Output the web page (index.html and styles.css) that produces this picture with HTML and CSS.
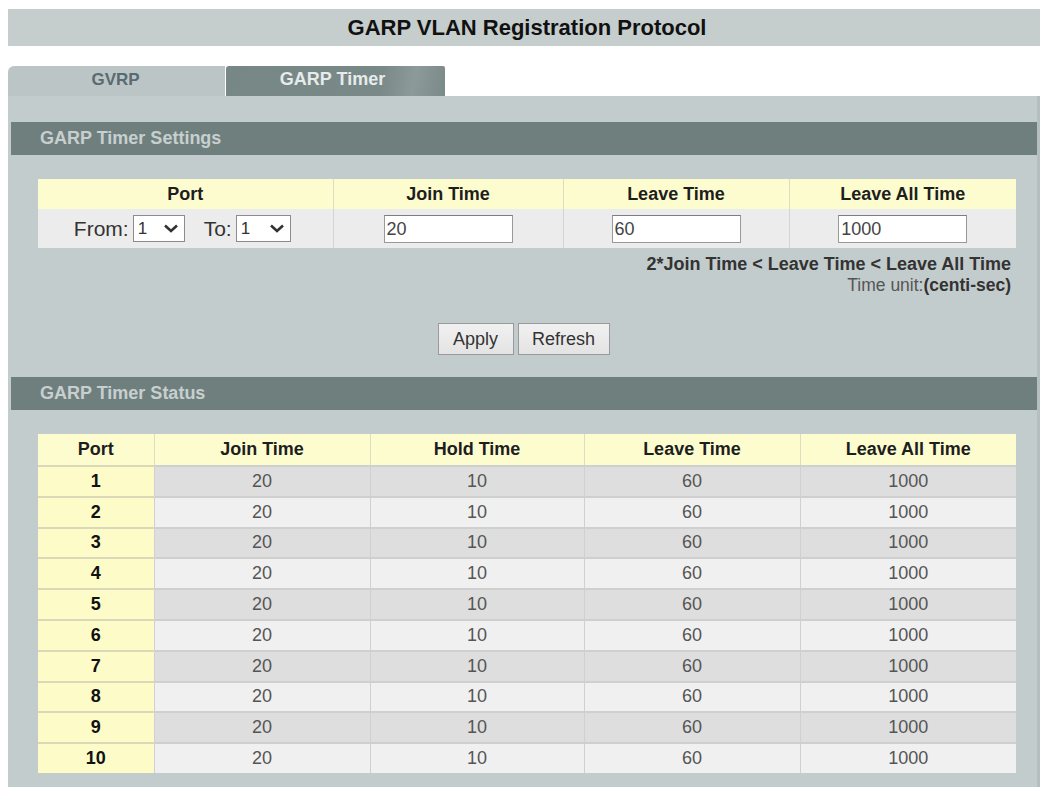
FILE: index.html
```html
<!DOCTYPE html>
<html>
<head>
<meta charset="utf-8">
<link rel="stylesheet" href="styles.css">
</head>
<body>
<div class="page">
  <div class="title-bar">GARP VLAN Registration Protocol</div>
  <div class="tabs">
    <div class="tab tab-inactive">GVRP</div>
    <div class="tab tab-active">GARP Timer</div>
  </div>
  <div class="panel">
    <div class="section-head">GARP Timer Settings</div>
    <table class="settings">
      <colgroup><col class="c1"><col class="c2"><col class="c3"><col class="c4"></colgroup>
      <thead>
        <tr><th>Port</th><th>Join Time</th><th>Leave Time</th><th>Leave All Time</th></tr>
      </thead>
      <tbody>
        <tr>
          <td>
            <div class="port-pick">
              <span class="lbl">From:</span>
              <span class="fake-select"><span>1</span><svg width="16" height="11" viewBox="0 0 16 11"><path d="M2 2.5 L8 8 L14 2.5" fill="none" stroke="#333" stroke-width="2.6"/></svg></span>
              <span class="lbl lbl-to">To:</span>
              <span class="fake-select"><span>1</span><svg width="16" height="11" viewBox="0 0 16 11"><path d="M2 2.5 L8 8 L14 2.5" fill="none" stroke="#333" stroke-width="2.6"/></svg></span>
            </div>
          </td>
          <td><span class="txt-input">20</span></td>
          <td><span class="txt-input">60</span></td>
          <td><span class="txt-input">1000</span></td>
        </tr>
      </tbody>
    </table>
    <div class="notes">
      <div class="note-rule">2*Join Time &lt; Leave Time &lt; Leave All Time</div>
      <div class="note-unit">Time unit:<b>(centi-sec)</b></div>
    </div>
    <div class="buttons">
      <span class="btn btn-apply">Apply</span>
      <span class="btn btn-refresh">Refresh</span>
    </div>
    <div class="section-head">GARP Timer Status</div>
    <table class="status">
      <colgroup><col class="s1"><col class="s2"><col class="s3"><col class="s4"><col class="s5"></colgroup>
      <thead>
        <tr><th>Port</th><th>Join Time</th><th>Hold Time</th><th>Leave Time</th><th>Leave All Time</th></tr>
      </thead>
      <tbody>
        <tr class="odd"><td class="port">1</td><td>20</td><td>10</td><td>60</td><td>1000</td></tr>
        <tr class="even"><td class="port">2</td><td>20</td><td>10</td><td>60</td><td>1000</td></tr>
        <tr class="odd"><td class="port">3</td><td>20</td><td>10</td><td>60</td><td>1000</td></tr>
        <tr class="even"><td class="port">4</td><td>20</td><td>10</td><td>60</td><td>1000</td></tr>
        <tr class="odd"><td class="port">5</td><td>20</td><td>10</td><td>60</td><td>1000</td></tr>
        <tr class="even"><td class="port">6</td><td>20</td><td>10</td><td>60</td><td>1000</td></tr>
        <tr class="odd"><td class="port">7</td><td>20</td><td>10</td><td>60</td><td>1000</td></tr>
        <tr class="even"><td class="port">8</td><td>20</td><td>10</td><td>60</td><td>1000</td></tr>
        <tr class="odd"><td class="port">9</td><td>20</td><td>10</td><td>60</td><td>1000</td></tr>
        <tr class="even"><td class="port">10</td><td>20</td><td>10</td><td>60</td><td>1000</td></tr>
      </tbody>
    </table>
  </div>
</div>
</body>
</html>
```

FILE: styles.css
```css
html, body {
  margin: 0;
  padding: 0;
  background: #ffffff;
  font-family: "Liberation Sans", Arial, sans-serif;
  overflow: hidden;
}

.page {
  width: 1032px;
  margin-left: 8px;
  padding-top: 9px;
}

.title-bar {
  height: 37px;
  background: #c5cdcd;
  color: #111;
  font-weight: bold;
  font-size: 22px;
  display: flex;
  align-items: center;
  justify-content: center;
  padding-left: 6px;
}

.tabs {
  display: flex;
  margin-top: 20px;
  height: 30px;
}

.tab {
  width: 217px;
  display: flex;
  align-items: center;
  justify-content: center;
  font-weight: bold;
  font-size: 17px;
  padding-bottom: 3px;
  box-sizing: border-box;
}

.tab-inactive {
  background: #bcc5c5;
  color: #5a6a72;
  border-top-left-radius: 6px;
  padding-right: 2px;
}

.tab-active {
  margin-left: 1px;
  width: 219px;
  background: linear-gradient(100deg, #778785 0%, #798987 70%, #8c9a99 85%, #7a8a88 100%);
  color: #e6ebeb;
  font-size: 18px;
  border-top-left-radius: 3px;
  border-top-right-radius: 2px;
  padding-right: 6px;
}

.panel {
  background: #c3cccc;
  padding: 26px 24px 40px 3px;
  height: 760px;
  box-sizing: border-box;
  border-right: 3px solid #b6bfbf;
}

.section-head {
  height: 33px;
  margin-right: -24px;
  background: #6f7f7d;
  color: #c7cfcf;
  font-weight: bold;
  font-size: 18px;
  display: flex;
  align-items: center;
  padding-left: 29px;
}

table {
  border-collapse: collapse;
  margin-left: 27px;
  width: 978px;
  table-layout: fixed;
}

.settings {
  margin-top: 24px;
}

.settings .c1 { width: 295px; }
.settings .c2 { width: 230px; }
.settings .c3 { width: 226px; }
.settings .c4 { width: 227px; }

th {
  background: #fdfccf;
  color: #1e1e1e;
  font-weight: bold;
  font-size: 18px;
  height: 30px;
  padding: 0;
  border-left: 1px solid #ddddc4;
}

th:first-child { border-left: none; }

.settings td {
  background: #ececec;
  height: 39px;
  padding: 0;
  text-align: center;
  border-left: 1px solid #d4d4d4;
}

.settings td:first-child { border-left: none; }

.port-pick {
  display: flex;
  align-items: center;
  justify-content: center;
  color: #333;
  font-size: 21px;
  padding-right: 6px;
}

.lbl { margin-right: 4px; }
.lbl-to { margin-left: 19px; }

.fake-select {
  display: inline-flex;
  align-items: center;
  justify-content: space-between;
  width: 52px;
  height: 27px;
  box-sizing: border-box;
  border: 1px solid #8c8c8c;
  background: #fff;
  padding: 0 5px 0 4px;
  font-size: 17px;
  color: #333;
}

.fake-select:last-child { width: 55px; }

.txt-input {
  display: inline-block;
  width: 129px;
  height: 28px;
  box-sizing: border-box;
  border: 1px solid #999;
  border-top-color: #7d7d7d;
  background: #fff;
  text-align: left;
  font-size: 18px;
  color: #444;
  line-height: 26px;
  padding-left: 2px;
}

.notes {
  margin-left: 27px;
  width: 973px;
  text-align: right;
  padding-top: 6px;
}

.note-rule {
  font-weight: bold;
  font-size: 18px;
  color: #333;
  line-height: 21px;
}

.note-unit {
  font-size: 17.5px;
  color: #555;
  line-height: 21px;
}

.note-unit b { color: #333; }

.buttons {
  display: flex;
  justify-content: center;
  gap: 4px;
  margin-top: 27px;
  margin-bottom: 22px;
  padding-left: 23px;
}

.btn {
  display: inline-flex;
  align-items: center;
  justify-content: center;
  height: 32px;
  box-sizing: border-box;
  border: 1px solid #9a9a9a;
  background: linear-gradient(#f1f1f1, #e3e3e3);
  font-size: 18px;
  color: #333;
}

.btn-apply { width: 76px; }
.btn-refresh { width: 92px; }

.status {
  margin-top: 24px;
}

.status .s1 { width: 116px; }
.status .s2 { width: 216px; }
.status .s3 { width: 214px; }
.status .s4 { width: 216px; }
.status .s5 { width: 216px; }

.status th { height: 31px; }

.status td {
  height: 28.8px;
  padding: 0;
  text-align: center;
  font-size: 18px;
  color: #555;
  border-top: 2px solid #cfcfcf;
  border-left: 1px solid #d0d0d0;
}

.status tr.odd td { background: #dedede; }
.status tr.even td { background: #f0f0f0; }

.status td.port {
  background: #fdfcc9 !important;
  color: #111;
  font-weight: bold;
  border-left: none;
  border-top-color: #d9d8b8;
}
```
